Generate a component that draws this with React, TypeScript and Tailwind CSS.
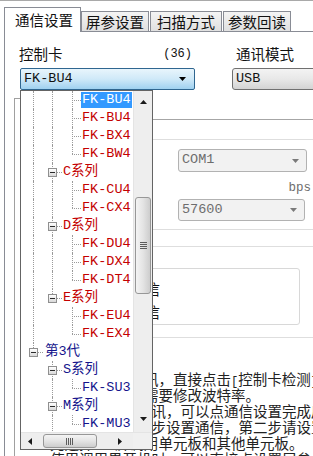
import React from "react";

const MONO = "font-['Liberation_Mono','Noto_Sans_CJK_SC',monospace]";
const CJK = "font-['Noto_Sans_CJK_SC','Liberation_Sans',sans-serif]";

type Line = "full" | "half" | "none";
type Row = {
  label: string;
  level: 0 | 1 | 2;
  blue?: boolean;
  lines: [Line, Line, Line];
  selected?: boolean;
};

const rows: Row[] = [
  { label: "FK-BU4", level: 2, lines: ["full", "full", "full"], selected: true },
  { label: "FK-BU4", level: 2, lines: ["full", "full", "full"] },
  { label: "FK-BX4", level: 2, lines: ["full", "full", "full"] },
  { label: "FK-BW4", level: 2, lines: ["full", "full", "half"] },
  { label: "C系列", level: 1, lines: ["full", "full", "none"] },
  { label: "FK-CU4", level: 2, lines: ["full", "full", "full"] },
  { label: "FK-CX4", level: 2, lines: ["full", "full", "half"] },
  { label: "D系列", level: 1, lines: ["full", "full", "none"] },
  { label: "FK-DU4", level: 2, lines: ["full", "full", "full"] },
  { label: "FK-DX4", level: 2, lines: ["full", "full", "full"] },
  { label: "FK-DT4", level: 2, lines: ["full", "full", "half"] },
  { label: "E系列", level: 1, lines: ["full", "half", "none"] },
  { label: "FK-EU4", level: 2, lines: ["full", "none", "full"] },
  { label: "FK-EX4", level: 2, lines: ["full", "none", "half"] },
  { label: "第3代", level: 0, blue: true, lines: ["half", "none", "none"] },
  { label: "S系列", level: 1, blue: true, lines: ["none", "full", "none"] },
  { label: "FK-SU3", level: 2, blue: true, lines: ["none", "full", "half"] },
  { label: "M系列", level: 1, blue: true, lines: ["none", "full", "none"] },
  { label: "FK-MU3", level: 2, blue: true, lines: ["none", "full", "half"] },
];

const lineLeft = ["left-[12px]", "left-[31px]", "left-[51px]"];
const stubClass = [
  "left-[12px] w-[10px]",
  "left-[31px] w-[10px]",
  "left-[51px] w-[9px]",
];
const boxLeft = ["left-[8px]", "left-[27px]", ""];
const textPad = ["pl-[23px]", "pl-[41px]", "pl-[60px]"];

// half-width latin, same pitch as the Song font of the original
const M = ({ children }: { children: React.ReactNode }) => (
  <span className={`text-[12px] ${MONO}`}>{children}</span>
);
const N = ({ children }: { children?: React.ReactNode }) => (
  <span className={`inline-block w-[21px] text-[12px] ${MONO}`}>{children}</span>
);

const notes = [
  <>
    <N>1.</N>控制卡为<M>USB</M>通讯，直接点击<M>[</M>控制卡检测<M>]</M>按钮
  </>,
  <>
    <N />串口<M>RS232</M>通讯需要修改波特率。
  </>,
  <>
    <N>2.</N>如需修改网络通讯，可以点通信设置完成后保存
  </>,
  <>
    <N>3.</N>首次使用请第一步设置通信，第二步请设置屏参
  </>,
  <>
    <N>4.</N>先选择<M>P10</M>屏调用单元板和其他单元板。
  </>,
  <>
    <N>5.</N>使用调用界开机时，可以直接点设置屏参
  </>,
];

const Tri = ({ dir, color = "#1a1a1a" }: { dir: "up" | "down" | "left" | "right"; color?: string }) => {
  const d = {
    up: "M0 4h7L3.5 0z",
    down: "M0 0h7L3.5 4z",
    left: "M4 0v7L0 3.5z",
    right: "M0 0v7L4 3.5z",
  }[dir];
  const v = dir === "up" || dir === "down";
  return (
    <svg width={v ? 7 : 4} height={v ? 4 : 7} viewBox={v ? "0 0 7 4" : "0 0 4 7"}>
      <path d={d} fill={color} />
    </svg>
  );
};

function TreeRow({ row }: { row: Row }) {
  return (
    <div className={`relative flex h-[18px] items-center ${textPad[row.level]}`}>
      {row.lines.map((l, i) =>
        l === "none" ? null : (
          <span
            key={i}
            className={`absolute top-0 w-0 border-l border-dotted border-[#9a9a9a] ${lineLeft[i]} ${
              l === "full" ? "h-full" : "h-[9px]"
            }`}
          />
        )
      )}
      <span className={`absolute top-[9px] h-0 border-t border-dotted border-[#9a9a9a] ${stubClass[row.level]}`} />
      {row.level < 2 && (
        <span
          className={`absolute top-[5px] h-[9px] w-[9px] border border-[#8f8f8f] bg-linear-to-b from-white to-[#d8d8d8] ${boxLeft[row.level]}`}
        >
          <span className="absolute top-[3px] left-[1px] h-px w-[5px] bg-[#2a2a2a]" />
        </span>
      )}
      <span
        className={`relative px-px text-[13.5px] leading-[16px] whitespace-nowrap ${
          row.selected ? "bg-[#3399ff] text-white" : row.blue ? "text-[#14148c]" : "text-[#c40000]"
        }`}
      >
        {row.label}
      </span>
    </div>
  );
}

function Dropdown() {
  return (
    <div className={`absolute top-[90px] left-[20px] flex h-[360px] w-[133px] flex-col border border-[#646464] bg-white ${MONO}`}>
      <div className="flex min-h-0 flex-1">
        <div className="relative flex-1 overflow-hidden">
          {rows.map((r, i) => (
            <TreeRow key={i} row={r} />
          ))}
        </div>
        <div className="flex w-[19px] flex-col border-l border-[#e4e4e4] bg-[#eeeeee]">
          <div className="flex h-[21px] items-center justify-center">
            <Tri dir="up" />
          </div>
          <div className="h-[85px]" />
          <div className="mx-px flex h-[97px] items-center justify-center rounded-[3px] border border-[#979797] bg-linear-to-r from-[#f4f4f4] via-[#e4e4e4] to-[#cdcdcd]">
            <svg width="7" height="8" viewBox="0 0 7 8">
              <path d="M0 0.5h7M0 2.5h7M0 4.5h7M0 6.5h7" stroke="#5c5c5c" strokeWidth="1" />
            </svg>
          </div>
          <div className="flex-1" />
          <div className="flex h-[26px] items-center justify-center">
            <Tri dir="down" />
          </div>
        </div>
      </div>
      <div className="flex h-[17px] border-t border-[#e4e4e4] bg-[#eeeeee]">
        <div className="flex w-[17px] items-center justify-center">
          <Tri dir="left" />
        </div>
        <div className="w-[5px]" />
        <div className="my-px flex w-[54px] items-center justify-center rounded-[3px] border border-[#979797] bg-linear-to-b from-[#f4f4f4] via-[#e4e4e4] to-[#cdcdcd]">
          <svg width="8" height="7" viewBox="0 0 8 7">
            <path d="M0.5 0v7M2.5 0v7M4.5 0v7M6.5 0v7" stroke="#5c5c5c" strokeWidth="1" />
          </svg>
        </div>
        <div className="flex-1" />
        <div className="flex w-[26px] items-center justify-center">
          <Tri dir="right" />
        </div>
        <div className="w-[19px] bg-[#f0f0f0]" />
      </div>
    </div>
  );
}

function GrayCombo({ value, width }: { value: string; width: string }) {
  return (
    <div
      className={`flex items-center justify-between rounded-[3px] border border-[#b2b2b2] bg-[#f2f2f2] pr-[7px] pl-[3px] text-[13.5px] text-[#6d6d6d] ${MONO} ${width}`}
    >
      <span>{value}</span>
      <Tri dir="down" color="#7a7a7a" />
    </div>
  );
}

export default function App() {
  return (
    <div className={`relative h-[456px] w-[313px] overflow-hidden bg-white text-[#111] ${CJK}`}>
      <div className="h-px bg-[#a9a9a9]" />

      {/* tabs */}
      <div className="flex h-[30px] items-end pl-[4px] text-[14.5px] leading-[18px]">
        <div className="relative z-10 -mb-px flex h-[25px] w-[77px] items-center justify-center border border-b-0 border-[#898c95] bg-white pl-[3px]">
          通信设置
        </div>
        <div className="flex h-[20px] w-[68px] items-center justify-center border border-b-0 border-[#898c95] bg-linear-to-b from-[#f4f4f4] to-[#e0e0e0]">
          屏参设置
        </div>
        <div className="ml-px flex h-[20px] w-[72px] items-center justify-center border border-b-0 border-[#898c95] bg-linear-to-b from-[#f4f4f4] to-[#e0e0e0]">
          扫描方式
        </div>
        <div className="ml-px flex h-[20px] w-[68px] items-center justify-center border border-b-0 border-[#898c95] bg-linear-to-b from-[#f4f4f4] to-[#e0e0e0]">
          参数回读
        </div>
      </div>

      {/* panel */}
      <div className="ml-[4px] h-full border-t border-l border-[#898c95]">
        <div className="grid grid-cols-[176px_1fr] gap-x-[37px] pt-[13px] pl-[14px]">
          <div className="flex h-[18px] items-center justify-between pr-[3px] text-[14.5px] leading-[18px]">
            <span>控制卡</span>
            <span className={`text-[12px] ${MONO}`}>(36)</span>
          </div>
          <div className="flex h-[18px] items-center pl-[4px] text-[14.5px] leading-[18px] whitespace-nowrap">通讯模式</div>
          <div
            className={`mt-[5px] ml-px flex h-[22px] items-center justify-between rounded-[2px] border border-[#2f6690] bg-linear-to-b from-[#e8f5fc] via-[#cfe9f8] to-[#9fd1f0] pr-[8px] pl-[3px] text-[13.5px] ${MONO}`}
          >
            <span>FK-BU4</span>
            <Tri dir="down" color="#000" />
          </div>
          <div
            className={`mt-[5px] flex h-[22px] w-[100px] items-center rounded-[3px] border border-[#707070] bg-linear-to-b from-[#f3f3f3] via-[#e8e8e8] to-[#d3d3d3] pl-[3px] text-[13.5px] ${MONO}`}
          >
            USB
          </div>
        </div>

        {/* content behind the open list */}
        <div className="mt-[8px] ml-[9px] flex flex-col border-l border-[#a0a0a0]">
          <div className="h-px w-[120px] bg-[#a0a0a0]" />
          <div className="mt-[20px] ml-[10px] h-px bg-[#a6a6a6]" />
          <div className="mt-[19px] ml-[10px] h-px bg-[#dedede]" />
          <div className="mt-[9px] ml-[163px] flex h-[23px]">
            <GrayCombo value="COM1" width="w-[129px]" />
          </div>
          <div className={`mt-[8px] h-[16px] pr-[2px] text-right text-[12.5px] leading-[16px] text-[#6d6d6d] ${MONO}`}>bps</div>
          <div className="mt-[3px] ml-[163px] flex h-[22px]">
            <GrayCombo value="57600" width="w-[127px]" />
          </div>
          <div className="mt-[8px] ml-[10px] h-px bg-[#dedede]" />
          <div className="mt-[16px] ml-[10px] h-px bg-[#dedede]" />
          <div className="mt-[21px] ml-[20px] flex h-[57px] w-[265px] flex-col rounded-[3px] border border-[#d8d8d8] pt-[10px] pl-[66px] text-[14.5px] leading-[20px]">
            <div className="h-[20px]">单机通信</div>
            <div className="mt-[3px] h-[20px]">网络通信</div>
          </div>
          <div className="mt-[12px] ml-[10px] h-px bg-[#dedede]" />
          <div className="mt-[33px] pl-[14px] text-[14.5px] leading-[16px] whitespace-pre text-[#222]">
            {notes.map((n, i) => (
              <div key={i} className="h-[16px]">
                {n}
              </div>
            ))}
          </div>
        </div>
      </div>

      <Dropdown />
    </div>
  );
}
